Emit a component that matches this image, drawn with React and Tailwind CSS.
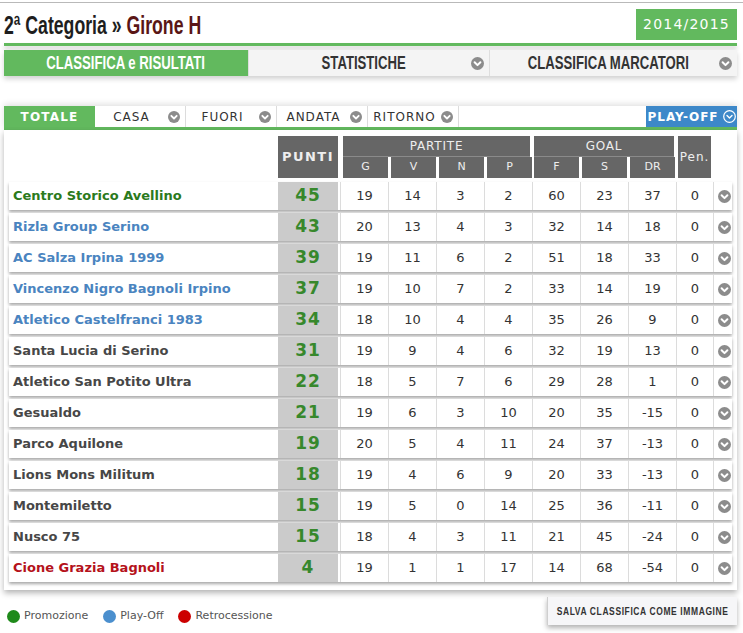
import React from "react";

const VERD = { fontFamily: "'DejaVu Sans', Verdana, sans-serif" };
const ARIAL = { fontFamily: "'Liberation Sans', Arial, sans-serif" };

function Chev({ size = 13, color = "#8c8c8c" }) {
  return (
    <svg width={size} height={size} viewBox="0 0 13 13" className="shrink-0">
      <circle cx="6.5" cy="6.5" r="6.5" fill={color} />
      <polyline points="3.6,5.2 6.5,8.1 9.4,5.2" fill="none" stroke="#fff" strokeWidth="2" strokeLinecap="round" strokeLinejoin="round" />
    </svg>
  );
}

function ChevOutline() {
  return (
    <svg width="13" height="13" viewBox="0 0 13 13" className="shrink-0">
      <circle cx="6.5" cy="6.5" r="5.8" fill="none" stroke="#fff" strokeWidth="1.2" />
      <polyline points="4,5.4 6.5,7.9 9,5.4" fill="none" stroke="#fff" strokeWidth="1.4" strokeLinecap="round" strokeLinejoin="round" />
    </svg>
  );
}

const rows = [
  ["Centro Storico Avellino", 45, 19, 14, 3, 2, 60, 23, 37, 0, "g"],
  ["Rizla Group Serino", 43, 20, 13, 4, 3, 32, 14, 18, 0, "b"],
  ["AC Salza Irpina 1999", 39, 19, 11, 6, 2, 51, 18, 33, 0, "b"],
  ["Vincenzo Nigro Bagnoli Irpino", 37, 19, 10, 7, 2, 33, 14, 19, 0, "b"],
  ["Atletico Castelfranci 1983", 34, 18, 10, 4, 4, 35, 26, 9, 0, "b"],
  ["Santa Lucia di Serino", 31, 19, 9, 4, 6, 32, 19, 13, 0, "n"],
  ["Atletico San Potito Ultra", 22, 18, 5, 7, 6, 29, 28, 1, 0, "n"],
  ["Gesualdo", 21, 19, 6, 3, 10, 20, 35, -15, 0, "n"],
  ["Parco Aquilone", 19, 20, 5, 4, 11, 24, 37, -13, 0, "n"],
  ["Lions Mons Militum", 18, 19, 4, 6, 9, 20, 33, -13, 0, "n"],
  ["Montemiletto", 15, 19, 5, 0, 14, 25, 36, -11, 0, "n"],
  ["Nusco 75", 15, 18, 4, 3, 11, 21, 45, -24, 0, "n"],
  ["Cione Grazia Bagnoli", 4, 19, 1, 1, 17, 14, 68, -54, 0, "r"],
];

const nameColor = { g: "text-[#2b7a1c]", b: "text-[#4a84c0]", n: "text-[#474747]", r: "text-[#b5121b]" };

function FilterCell({ label }) {
  return (
    <div className="w-[91px] h-full flex items-center border-r border-[#dcdcdc] pr-[5px]">
      <span className="flex-1 text-center text-[12px] tracking-[1px] text-[#333]">{label}</span>
      <Chev size={12} />
    </div>
  );
}

export default function App() {
  return (
    <div className="w-[743px] h-[633px] bg-white overflow-hidden" style={VERD}>
      {/* title */}
      <div className="h-[2px]" />
      <div className="h-px bg-[#b9b9b9]" />
      <div className="ml-[4px] w-[733px] h-[40px] flex items-end justify-between pb-[3px]">
        <div className="whitespace-nowrap mb-[-1px]">
          <span className="inline-block origin-left scale-x-[0.68] text-[26px] leading-none font-bold text-[#1e1e1e]" style={ARIAL}>
            2ª Categoria » <span className="text-[#5a1616]">Girone H</span>
          </span>
        </div>
        <div className="w-[101px] h-[31px] bg-[#62b95e] flex items-center justify-center text-white text-[14px] tracking-[1.2px]">
          2014/2015
        </div>
      </div>
      <div className="ml-[4px] w-[733px] h-[3px] bg-[#62b95e] shadow-[0_3px_4px_rgba(0,0,0,0.2)]" />

      {/* tabs */}
      <div className="ml-[4px] w-[733px] h-[26px] mt-[4px] flex shadow-[0_3px_5px_rgba(0,0,0,0.18)]" style={ARIAL}>
        <div className="w-[245px] h-full bg-[#62b95e] flex items-center justify-center whitespace-nowrap">
          <span className="inline-block scale-x-[0.73] text-white text-[18px] font-bold">CLASSIFICA e RISULTATI</span>
        </div>
        <div className="w-[243px] h-full bg-[#f4f4f4] border-l border-[#dedede] flex items-center pr-[5px]">
          <span className="flex-1 flex justify-center pl-[8px] whitespace-nowrap">
            <span className="inline-block scale-x-[0.73] text-[18px] text-[#333] font-bold">STATISTICHE</span>
          </span>
          <Chev />
        </div>
        <div className="flex-1 h-full bg-[#f4f4f4] border-l border-[#dedede] flex items-center pr-[5px]">
          <span className="flex-1 flex justify-center pl-[8px] whitespace-nowrap">
            <span className="inline-block scale-x-[0.73] text-[18px] text-[#333] font-bold">CLASSIFICA MARCATORI</span>
          </span>
          <Chev />
        </div>
      </div>

      {/* filters */}
      <div className="ml-[4px] w-[733px] mt-[30px] h-[24px] bg-white border-b-[3px] border-[#62b95e] flex shadow-[0_-2px_6px_rgba(0,0,0,0.12)]">
        <div className="w-[91px] h-full bg-[#62b95e] flex items-center justify-center text-white text-[12px] font-bold tracking-[1.2px]">
          TOTALE
        </div>
        <FilterCell label="CASA" />
        <FilterCell label="FUORI" />
        <FilterCell label="ANDATA" />
        <FilterCell label="RITORNO" />
        <div className="flex-1" />
        <div className="w-[91px] h-full bg-[#3d88c9] flex items-center justify-center gap-[4px] text-white text-[12px] font-bold tracking-[1px]">
          PLAY-OFF <ChevOutline />
        </div>
      </div>

      {/* table panel */}
      <div className="ml-[4px] w-[733px] h-[460px] bg-white px-[5px] pt-[6px] shadow-[0_3px_6px_rgba(0,0,0,0.3)]">
        {/* header */}
        <div className="flex h-[42px] text-[#eee]">
          <div className="w-[269px]" />
          <div className="w-[60px] h-full bg-[#666] flex items-center justify-center text-[13px] font-bold tracking-[1.5px]">PUNTI</div>
          <div className="w-[2px]" />
          <div className="w-[192px] h-full flex flex-col">
            <div className="ml-[3px] mr-[2px] h-[21px] bg-[#666] border-b border-[#8a8a8a] flex items-center justify-center text-[12px] tracking-[0.8px]">PARTITE</div>
            <div className="flex h-[21px]">
              {["G", "V", "N", "P"].map((h) => (
                <div key={h} className="w-[48px] pl-[3px]">
                  <div className="h-full bg-[#666] flex items-center justify-center text-[11px]">{h}</div>
                </div>
              ))}
            </div>
          </div>
          <div className="w-[144px] h-full flex flex-col">
            <div className="ml-[2px] mr-[2px] h-[21px] bg-[#666] border-b border-[#8a8a8a] flex items-center justify-center text-[12px] tracking-[0.8px]">GOAL</div>
            <div className="flex h-[21px]">
              {["F", "S", "DR"].map((h) => (
                <div key={h} className="w-[48px] pl-[2px] pr-[1px]">
                  <div className="h-full bg-[#666] flex items-center justify-center text-[11px]">{h}</div>
                </div>
              ))}
            </div>
          </div>
          <div className="w-[37px] h-full px-[2px]">
            <div className="h-full bg-[#666] flex items-center justify-center text-[12px] tracking-[1px]">Pen.</div>
          </div>
        </div>

        {/* rows */}
        <div className="mt-[4px] flex flex-col gap-[3px]">
          {rows.map((r, i) => (
            <div key={i} className="h-[28px] bg-white flex items-stretch shadow-[0_2px_3px_rgba(0,0,0,0.35)]">
              <div className={`w-[269px] pl-[4px] flex items-center text-[13px] font-bold ${nameColor[r[10]]}`}>{r[0]}</div>
              <div className="w-[60px] bg-[#cbcbcb] flex items-center justify-center text-[17px] font-bold text-[#37882c] tracking-[1px]">{r[1]}</div>
              <div className="w-[2px]" />
              {r.slice(2, 9).map((v, j) => (
                <div key={j} className="w-[48px] border-l border-[#dcdcdc] flex items-center justify-center text-[13px] text-[#333]">{v}</div>
              ))}
              <div className="w-[37px] border-l border-[#dcdcdc] flex items-center justify-center text-[13px] text-[#333]">{r[9]}</div>
              <div className="flex-1 border-l border-[#dcdcdc] flex items-center justify-center pl-[3px]">
                <Chev />
              </div>
            </div>
          ))}
        </div>
      </div>

      {/* legend */}
      <div className="ml-[4px] w-[733px] mt-[7px] flex items-start justify-between">
        <div className="flex items-center mt-[11px] text-[11px] text-[#555]">
          <span className="w-[13px] h-[13px] rounded-full bg-[#1f8a1a] ml-[3px] mr-[4px]" />
          <span>Promozione</span>
          <span className="w-[13px] h-[13px] rounded-full bg-[#4b8fce] ml-[15px] mr-[4px]" />
          <span>Play-Off</span>
          <span className="w-[13px] h-[13px] rounded-full bg-[#cc0000] ml-[15px] mr-[4px]" />
          <span>Retrocessione</span>
        </div>
        <div className="w-[190px] h-[28px] bg-[#f6f6f8] border-l border-[#cfcfcf] flex items-center justify-center whitespace-nowrap shadow-[0_3px_5px_rgba(0,0,0,0.3)]" style={ARIAL}>
          <span className="inline-block scale-x-[0.77] text-[11px] font-bold tracking-[0.8px] text-[#333]">SALVA CLASSIFICA COME IMMAGINE</span>
        </div>
      </div>
    </div>
  );
}
